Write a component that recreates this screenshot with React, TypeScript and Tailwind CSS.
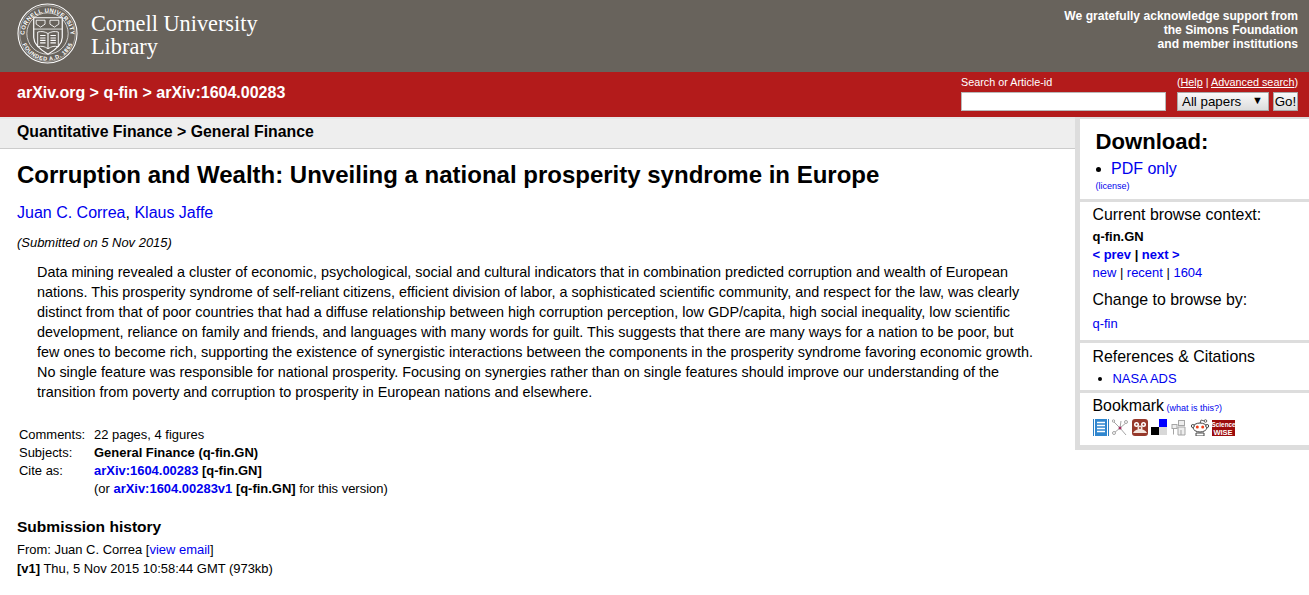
const sans = { fontFamily: '"Liberation Sans", Arial, sans-serif' };

function Seal() {
  return (
    <svg width="61" height="61" viewBox="0 0 62 62" className="shrink-0" fill="none" stroke="#fff">
      <defs>
        <path id="sealTop" d="M7.500 33a23.500 23.500 0 0 1 47 0" />
        <path id="sealBottom" d="M3.500 31a27.500 27.500 0 0 0 55 0" />
      </defs>
      <circle cx="31" cy="31" r="30" strokeWidth="1.100" />
      <circle cx="31" cy="31" r="28.300" strokeWidth="0.400" />
      <circle cx="31" cy="31" r="21" strokeWidth="0.700" />
      <text fill="#fff" stroke="none" fontSize="6" fontWeight="700" style={{ fontFamily: '"Liberation Sans", sans-serif' }}>
        <textPath href="#sealTop" startOffset="50%" textAnchor="middle" textLength="72">CORNELL UNIVERSITY</textPath>
      </text>
      <text fill="#fff" stroke="none" fontSize="5.600" fontWeight="700" style={{ fontFamily: '"Liberation Sans", sans-serif' }}>
        <textPath href="#sealBottom" startOffset="50%" textAnchor="middle" textLength="64">FOUNDED A.D. 1865</textPath>
      </text>
      <path d="M17 15h29v20c0 7-6 12-14.500 17C23 47 17 42 17 35z" fill="#68635c" strokeWidth="1.200" />
      <path d="M17 26.500h29" strokeWidth="0.800" />
      <path d="M19.500 17.500h9v4l-4.500 3-4.500-3zM33.500 17.500h9v4l-4.500 3-4.500-3z" strokeWidth="0.900" />
      <path d="M21 29.500c4-1 7-.5 10.500 1.500 3.500-2 6.500-2.500 10.500-1.500v15c-4-1-7-.5-10.500 2-3.500-2.500-6.500-3-10.500-2z" strokeWidth="0.900" />
      <path d="M31.500 31v15M23.500 33h5.500M23.500 35.500h5.500M23.500 38h5.500M23.500 40.500h5.500M34 33h5.500M34 35.500h5.500M34 38h5.500M34 40.500h5.500" strokeWidth="1.100" />
    </svg>
  );
}

function BookmarkIcons() {
  return (
    <div className="flex items-start gap-[3px]">
      <svg width="16" height="17" viewBox="0 0 16 17">
        <rect x="0" y="0" width="1" height="17" fill="#2a7fc6" />
        <rect x="15" y="0" width="1" height="17" fill="#2a7fc6" />
        <rect x="2" y="0" width="12" height="17" fill="#2f86cf" />
        <path d="M4 3.500h8M4 6.500h8M4 9.500h8M4 12.500h8" stroke="#fff" strokeWidth="1.500" />
      </svg>
      <svg width="16" height="17" viewBox="0 0 16 17" fill="none" stroke="#a5a5a5" strokeWidth="1">
        <path d="M1 2l7 7 7-6M8 9l-6 5M8 9l6 7M8 9l1-7" />
        <circle cx="14" cy="3" r="1.500" fill="#fff" />
        <circle cx="2" cy="14" r="1.500" fill="#fff" />
        <circle cx="1.500" cy="2" r="1.200" fill="#fff" />
        <circle cx="8" cy="9" r="1.500" fill="#a03060" stroke="none" />
      </svg>
      <svg width="16" height="17" viewBox="0 0 16 17" className="ml-px">
        <rect width="16" height="17" rx="3" fill="#96382a" />
        <circle cx="4.500" cy="5.500" r="2.500" fill="#fff" />
        <circle cx="11.500" cy="5.500" r="2.500" fill="#fff" />
        <circle cx="8" cy="9" r="2.500" fill="#f3e4dc" />
        <path d="M1 14c2-3 4-4 7-4s5 1 7 4z" fill="#f3e4dc" />
        <circle cx="4.500" cy="5.500" r="1" fill="#96382a" />
        <circle cx="11.500" cy="5.500" r="1" fill="#96382a" />
        <circle cx="8" cy="9" r="1" fill="#96382a" />
      </svg>
      <svg width="16" height="17" viewBox="0 0 16 17">
        <rect x="8" y="0" width="8" height="8" fill="#0000ff" />
        <rect x="0" y="8" width="8" height="8" fill="#000" />
        <rect x="8" y="8" width="8" height="8" fill="#d8d8d8" />
      </svg>
      <svg width="16" height="17" viewBox="0 0 16 17" className="ml-px" fill="#eeeeee" stroke="#a5a5a5" strokeWidth="1">
        <rect x="7.500" y="1.500" width="6" height="5" />
        <rect x="1" y="5.500" width="5" height="4" />
        <path d="M2.500 9.500v6M7 8h7v8H7zM10 11v5" />
      </svg>
      <svg width="18" height="17" viewBox="0 0 18 17" className="ml-px">
        <path d="M9 5l1-4 3.500 1" fill="none" stroke="#666" strokeWidth="1" />
        <circle cx="14.500" cy="2" r="1.300" fill="#fff" stroke="#666" />
        <ellipse cx="9" cy="8.500" rx="7" ry="4.500" fill="#fff" stroke="#444" />
        <circle cx="1.800" cy="7" r="1.500" fill="#fff" stroke="#444" />
        <circle cx="16.200" cy="7" r="1.500" fill="#fff" stroke="#444" />
        <circle cx="6.300" cy="8" r="1.500" fill="#f0401a" />
        <circle cx="11.700" cy="8" r="1.500" fill="#f0401a" />
        <path d="M5 14h8v3H5z" fill="#fff" stroke="#444" />
      </svg>
      <div className="w-[23px] h-[16px] mt-px bg-[#9c0c0c] text-white text-center font-bold text-[7.500px] leading-[7.500px] pt-px">
        <div className="text-[6.400px]">Science</div>
        <div>WISE</div>
      </div>
    </div>
  );
}

export default function App() {
  return (
    <div className="text-[12.960px] leading-[18px] text-black bg-white min-h-[595px]" style={sans}>
      <header className="h-[72px] bg-[#68635c] flex justify-between pl-[17px] pr-[11px]">
        <div className="flex items-start pt-[3px] gap-[13px]">
          <Seal />
          <div
            className="text-white text-[22.300px] leading-[23px] pt-[9px]"
            style={{ fontFamily: '"Liberation Serif", serif' }}
          >
            Cornell University
            <br />
            Library
          </div>
        </div>
        <div className="text-white text-right font-bold text-[12.100px] leading-[14px] pt-[9px]">
          We gratefully acknowledge support from
          <br />
          the Simons Foundation
          <br />
          and member institutions
        </div>
      </header>

      <div className="h-[45px] bg-[#b31b1b] flex justify-between pl-[17px] pr-[11px]">
        <div className="text-white font-bold text-[16px] leading-[18px] pt-[12px]">arXiv.org &gt; q-fin &gt; arXiv:1604.00283</div>
        <div className="flex flex-col pt-[3px] w-[337px] text-white">
          <div className="flex justify-between text-[10.800px] leading-[15px]">
            <span>Search or Article-id</span>
            <span>
              (<span className="underline">Help</span> | <span className="underline">Advanced search</span>)
            </span>
          </div>
          <div className="flex items-start mt-[2px]">
            <div className="w-[205px] h-[19px] bg-white border border-[#b9b9b9]" />
            <div className="ml-[11px] w-[92px] h-[19px] border border-[#a9a9a9] bg-gradient-to-b from-[#fafafa] to-[#dcdcdc] text-black text-[13.333px] leading-[18px] pl-[4px] relative">
              All papers
              <span className="absolute right-[5px] top-0 text-[11px] leading-[15px]">▼</span>
            </div>
            <div className="ml-[4px] w-[25px] h-[19px] border border-[#a9a9a9] bg-gradient-to-b from-[#fafafa] to-[#dcdcdc] text-black text-[13.333px] leading-[18px] text-center">
              Go!
            </div>
          </div>
        </div>
      </div>

      <div className="flex">
        <main className="flex-1 min-w-0">
          <div className="h-[32px] bg-[#eeeeee] border-t-2 border-b border-t-[#e6e6e6] border-b-[#cccccc] pl-[17px] pr-[11px] font-bold text-[15.840px] leading-[26px]">
            Quantitative Finance &gt; General Finance
          </div>
          <div className="pl-[17px] pr-[12px]">
            <h1 className="text-[24px] leading-[28px] font-bold pt-[12px]">
              Corruption and Wealth: Unveiling a national prosperity syndrome in Europe
            </h1>
            <div className="text-[16px] leading-[18px] mt-[15px] text-[#0000ee]">
              Juan C. Correa<span className="text-black">,</span> Klaus Jaffe
            </div>
            <div className="italic mt-[12px]">(Submitted on 5 Nov 2015)</div>
            <p className="text-[14.400px] leading-[20px] mt-[10px] ml-[20px] mr-[28px]">
              Data mining revealed a cluster of economic, psychological, social and cultural indicators that in combination predicted corruption and wealth of European nations. This prosperity syndrome of self-reliant citizens, efficient division of labor, a sophisticated scientific community, and respect for the law, was clearly distinct from that of poor countries that had a diffuse relationship between high corruption perception, low GDP/capita, high social inequality, low scientific development, reliance on family and friends, and languages with many words for guilt. This suggests that there are many ways for a nation to be poor, but few ones to become rich, supporting the existence of synergistic interactions between the components in the prosperity syndrome favoring economic growth. No single feature was responsible for national prosperity. Focusing on synergies rather than on single features should improve our understanding of the transition from poverty and corruption to prosperity in European nations and elsewhere.
            </p>
            <div className="grid grid-cols-[75px_1fr] ml-[2px] mt-[24px]">
              <div>Comments:</div>
              <div>22 pages, 4 figures</div>
              <div>Subjects:</div>
              <div className="font-bold">General Finance (q-fin.GN)</div>
              <div>Cite as:</div>
              <div className="font-bold">
                <span className="text-[#0000ee]">arXiv:1604.00283</span> [q-fin.GN]
              </div>
              <div />
              <div>
                (or <span className="font-bold text-[#0000ee]">arXiv:1604.00283v1</span> <span className="font-bold">[q-fin.GN]</span> for this version)
              </div>
            </div>
            <h2 className="font-bold text-[15.552px] leading-[18px] mt-[20px]">Submission history</h2>
            <div className="mt-[5px]">
              From: Juan C. Correa [<span className="text-[#0000ee]">view email</span>]
            </div>
            <div className="mt-px">
              <span className="font-bold">[v1]</span> Thu, 5 Nov 2015 10:58:44 GMT (973kb)
            </div>
          </div>
        </main>

        <aside className="w-[234px] shrink-0 self-start bg-[#dddddd] pl-[5px] pt-[2px] pb-[5px] flex flex-col gap-[3px]">
          <section className="bg-white h-[80px] pl-[15.500px] pt-[8px]">
            <h2 className="text-[22.100px] leading-[30px] font-bold">Download:</h2>
            <div className="flex items-center text-[16px] leading-[18px] text-[#0000ee] mt-[3px]">
              <span className="w-[5px] h-[5px] rounded-full bg-black mr-[10.500px]" />
              PDF only
            </div>
            <div className="text-[9px] leading-[12px] mt-[2px]">
              <span className="text-[#0000ee]">(license)</span>
            </div>
          </section>
          <section className="bg-white h-[138px] pl-[12.500px] pt-[2px]">
            <h3 className="text-[15.900px] leading-[22px]">Current browse context:</h3>
            <div className="font-bold mt-[2px]">q-fin.GN</div>
            <div className="font-bold text-[#0000ee]">
              &lt; prev <span className="text-black font-bold">|</span> next &gt;
            </div>
            <div className="text-[#0000ee]">
              new <span className="text-black">|</span> recent <span className="text-black">|</span> 1604
            </div>
            <h3 className="text-[15.900px] leading-[22px] mt-[7px]">Change to browse by:</h3>
            <div className="text-[#0000ee] mt-[4px]">q-fin</div>
          </section>
          <section className="bg-white h-[47px] pl-[12.500px] pt-[3px]">
            <h3 className="text-[15.900px] leading-[22px]">References &amp; Citations</h3>
            <div className="flex items-center text-[#0000ee] mt-[2px] pl-[5px]">
              <span className="w-[4px] h-[4px] rounded-full bg-black mr-[11px]" />
              NASA ADS
            </div>
          </section>
          <section className="bg-white h-[52px] pl-[12.500px] pt-[2px]">
            <div className="text-[15.900px] leading-[22px]">
              Bookmark <span className="text-[9px] text-[#0000ee] -ml-[2px]">(what is this?)</span>
            </div>
            <BookmarkIcons />
          </section>
        </aside>
      </div>
    </div>
  );
}
